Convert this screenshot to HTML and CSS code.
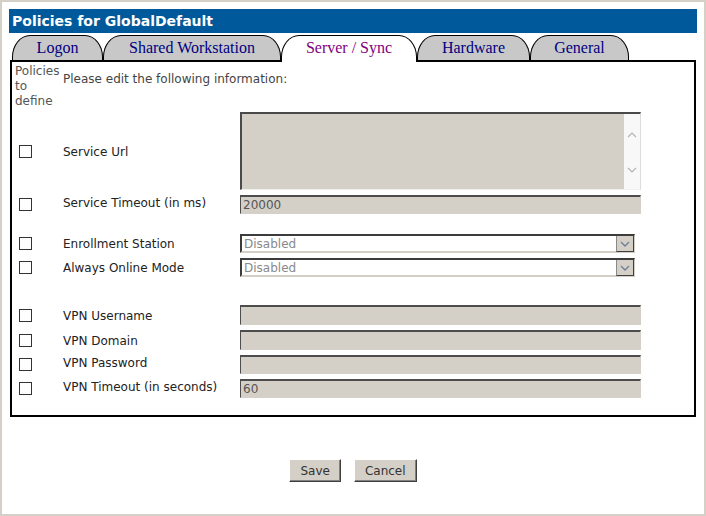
FILE: index.html
```html
<!DOCTYPE html>
<html>
<head>
<meta charset="utf-8">
<title>Policies for GlobalDefault</title>
<link rel="stylesheet" href="styles.css">
</head>
<body>
<div class="window">
  <div class="titlebar">Policies for GlobalDefault</div>
  <div class="tabs">
    <div class="tab w-logon">Logon</div>
    <div class="tab w-shared">Shared Workstation</div>
    <div class="tab active w-server">Server / Sync</div>
    <div class="tab w-hardware">Hardware</div>
    <div class="tab w-general">General</div>
  </div>
  <div class="panel">
    <div class="row head">
      <div class="policies">Policies<br>to<br>define</div>
      <div class="intro">Please edit the following information:</div>
    </div>
    <div class="row r-url">
      <div class="cbcell"><input type="checkbox" class="cb"></div>
      <div class="label">Service Url</div>
      <div class="textarea">
        <div class="ta-body"></div>
        <div class="ta-scroll">
          <svg width="10" height="6" viewBox="0 0 10 6"><path d="M1 5 L5 1 L9 5" fill="none" stroke="#b4b4b4" stroke-width="1.2"/></svg>
          <svg width="10" height="6" viewBox="0 0 10 6"><path d="M1 1 L5 5 L9 1" fill="none" stroke="#b4b4b4" stroke-width="1.2"/></svg>
        </div>
      </div>
    </div>
    <div class="row r-gap5">
      <div class="cbcell"><input type="checkbox" class="cb"></div>
      <div class="label lift">Service Timeout (in ms)</div>
      <input class="field" type="text" value="20000" readonly>
    </div>
    <div class="row r-gap20">
      <div class="cbcell"><input type="checkbox" class="cb"></div>
      <div class="label">Enrollment Station</div>
      <div class="select"><span class="sel-text">Disabled</span><span class="sel-btn"><svg width="10" height="6" viewBox="0 0 10 6"><path d="M1 1 L5 5 L9 1" fill="none" stroke="#6d7d98" stroke-width="1.3"/></svg></span></div>
    </div>
    <div class="row r-gap5">
      <div class="cbcell"><input type="checkbox" class="cb"></div>
      <div class="label">Always Online Mode</div>
      <div class="select"><span class="sel-text">Disabled</span><span class="sel-btn"><svg width="10" height="6" viewBox="0 0 10 6"><path d="M1 1 L5 5 L9 1" fill="none" stroke="#6d7d98" stroke-width="1.3"/></svg></span></div>
    </div>
    <div class="row r-gap28">
      <div class="cbcell"><input type="checkbox" class="cb"></div>
      <div class="label">VPN Username</div>
      <input class="field tall" type="text" value="" readonly>
    </div>
    <div class="row r-gap5">
      <div class="cbcell"><input type="checkbox" class="cb"></div>
      <div class="label">VPN Domain</div>
      <input class="field tall" type="text" value="" readonly>
    </div>
    <div class="row r-gap5">
      <div class="cbcell"><input type="checkbox" class="cb"></div>
      <div class="label lift">VPN Password</div>
      <input class="field" type="text" value="" readonly>
    </div>
    <div class="row r-gap5">
      <div class="cbcell"><input type="checkbox" class="cb"></div>
      <div class="label lift">VPN Timeout (in seconds)</div>
      <input class="field" type="text" value="60" readonly>
    </div>
  </div>
  <div class="actions">
    <button class="btn">Save</button>
    <button class="btn">Cancel</button>
  </div>
</div>
</body>
</html>
```

FILE: styles.css
```css
html, body {
  margin: 0;
  padding: 0;
  background: #ffffff;
}

.window {
  box-sizing: border-box;
  width: 706px;
  height: 516px;
  border: 2px solid #d4d0c8;
  padding: 7px;
  font-family: "DejaVu Sans", Verdana, sans-serif;
  font-size: 12px;
}

.titlebar {
  height: 24px;
  line-height: 24px;
  background: #00599b;
  color: #ffffff;
  font-weight: bold;
  font-size: 14px;
  padding-left: 3px;
}

.tabs {
  display: flex;
  align-items: flex-end;
  margin-top: 2px;
  padding-left: 3px;
  height: 25px;
}

.tab {
  box-sizing: border-box;
  height: 25px;
  border: 1px solid #000;
  border-bottom: none;
  border-radius: 18px 18px 0 0 / 22px 22px 0 0;
  background: #c8c8c8;
  color: #000080;
  font-family: "Liberation Serif", "Times New Roman", serif;
  font-size: 16px;
  line-height: 24px;
  text-align: center;
}

.tab.active {
  background: #ffffff;
  color: #800080;
  height: 27px;
  margin-bottom: -2px;
  position: relative;
  z-index: 1;
}

.w-logon { width: 91px; }
.w-shared { width: 178px; }
.w-server { width: 136px; }
.w-hardware { width: 113px; }
.w-general { width: 99px; }

.panel {
  box-sizing: border-box;
  width: 686px;
  margin-left: 1px;
  border: 2px solid #000;
  padding: 1px 0 17px 0;
}

.row {
  display: grid;
  grid-template-columns: 51px 177px 401px;
  align-items: center;
}

.head {
  height: 45px;
  align-items: start;
}

.policies {
  padding-left: 3px;
  padding-top: 1px;
  line-height: 15px;
  color: #555555;
}

.intro {
  grid-column: 2 / 4;
  padding-top: 9px;
  line-height: 15px;
  color: #444444;
}

.r-url { margin-top: 4px; }
.r-gap5 { margin-top: 5px; }
.r-gap20 { margin-top: 20px; }
.r-gap28 { margin-top: 28px; }

.cbcell {
  display: flex;
  align-items: center;
  padding-left: 7px;
}

.cb {
  -webkit-appearance: none;
  appearance: none;
  box-sizing: border-box;
  width: 13px;
  height: 13px;
  margin: 0;
  border: 1px solid #333333;
  background: #ffffff;
}

.label {
  color: #222222;
  line-height: 15px;
  position: relative;
  top: 1px;
}

.label.lift {
  top: -1px;
}

.textarea {
  box-sizing: border-box;
  height: 78px;
  display: flex;
  border-top: 2px solid #4a4a4a;
  border-left: 2px solid #4a4a4a;
  border-right: 1px solid #dcdcdc;
  border-bottom: 1px solid #f0f0f0;
  background: #d4d0c8;
}

.ta-body {
  flex: 1;
}

.ta-scroll {
  width: 16px;
  background: #f8f8f8;
  display: flex;
  flex-direction: column;
  align-items: center;
  justify-content: space-between;
  padding: 18px 0 16px;
}

.field {
  box-sizing: border-box;
  width: 401px;
  height: 19px;
  margin: 0;
  padding: 0 0 0 2px;
  border-top: 2px solid #4d4d4d;
  border-left: 1px solid #4d4d4d;
  border-right: 1px solid #d4d0c8;
  border-bottom: 1px solid #d4d0c8;
  background: #d4d0c8;
  color: #555555;
  font-family: "DejaVu Sans", Verdana, sans-serif;
  font-size: 12px;
  outline: none;
}

.field.tall {
  height: 20px;
}

.select {
  box-sizing: border-box;
  width: 395px;
  height: 19px;
  display: flex;
  align-items: center;
  justify-content: space-between;
  border-top: 2px solid #3c3c3c;
  border-left: 2px solid #3c3c3c;
  border-right: 1px solid #d4d0c8;
  border-bottom: 2px solid #d4d0c8;
  background: #ffffff;
}

.sel-text {
  padding-left: 2px;
  color: #8a8a8a;
}

.sel-btn {
  box-sizing: border-box;
  width: 18px;
  height: 16px;
  margin-top: 1px;
  display: flex;
  align-items: center;
  justify-content: center;
  background: #d4d0c8;
  border-left: 1px solid #8a8a8a;
  border-right: 1px solid #404040;
  border-bottom: 1px solid #404040;
}

.actions {
  display: flex;
  justify-content: center;
  gap: 13px;
  margin-top: 42px;
}

.btn {
  box-sizing: border-box;
  height: 23px;
  padding: 0 10px;
  margin: 0;
  background: #d4d0c8;
  border-top: 1px solid #ffffff;
  border-left: 1px solid #ffffff;
  border-right: 1px solid #404040;
  border-bottom: 1px solid #404040;
  box-shadow: inset -1px -1px 0 #808080;
  color: #333333;
  font-family: "DejaVu Sans", Verdana, sans-serif;
  font-size: 12px;
}
```
